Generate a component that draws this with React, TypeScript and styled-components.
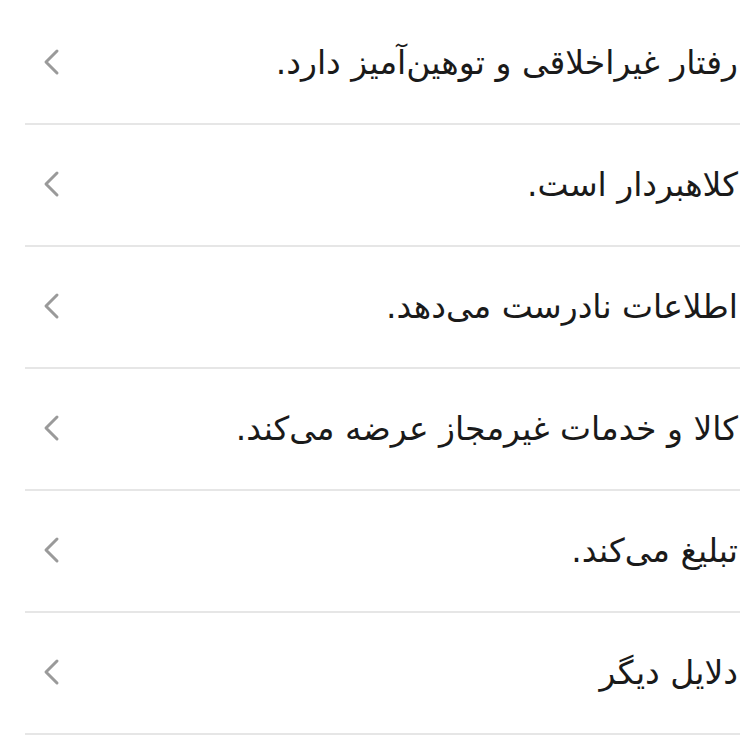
import React, {FC} from "react";
import styled, {createGlobalStyle} from "styled-components";

const GlobalStyle = createGlobalStyle`
  html, body {
    margin: 0;
    padding: 0;
    background: #ffffff;
  }
  body {
    font-family: "DejaVu Sans", "Noto Sans", sans-serif;
  }
`

const List = styled.ul`
  list-style: none;
  margin: 0;
  padding: 3px 12px 0 25px;
  direction: rtl;
`

const Row = styled.li`
  display: flex;
  align-items: center;
  justify-content: space-between;
  height: 122px;
  box-sizing: border-box;
  padding: 0 2px 2px 18px;
  border-bottom: 2px solid #e6e6e6;
  cursor: pointer;
`

const Label = styled.span`
  font-size: 33px;
  color: #1a1a1a;
  line-height: 1;
  white-space: nowrap;
`

const Chevron: FC = () => (
    <svg width="18" height="30" viewBox="0 0 18 30" fill="none">
        <polyline
            points="14,4 3,15 14,26"
            stroke="#9a9a9a"
            strokeWidth="3"
            strokeLinecap="round"
            strokeLinejoin="round"
        />
    </svg>
)

const reasons = [
    "رفتار غیراخلاقی و توهین‌آمیز دارد.",
    "کلاهبردار است.",
    "اطلاعات نادرست می‌دهد.",
    "کالا و خدمات غیرمجاز عرضه می‌کند.",
    "تبلیغ می‌کند.",
    "دلایل دیگر",
]

const App: FC = () => {
    return (
        <>
            <GlobalStyle/>
            <List>
                {reasons.map((reason) => (
                    <Row key={reason}>
                        <Label>{reason}</Label>
                        <Chevron/>
                    </Row>
                ))}
            </List>
        </>
    )
}

export default App
